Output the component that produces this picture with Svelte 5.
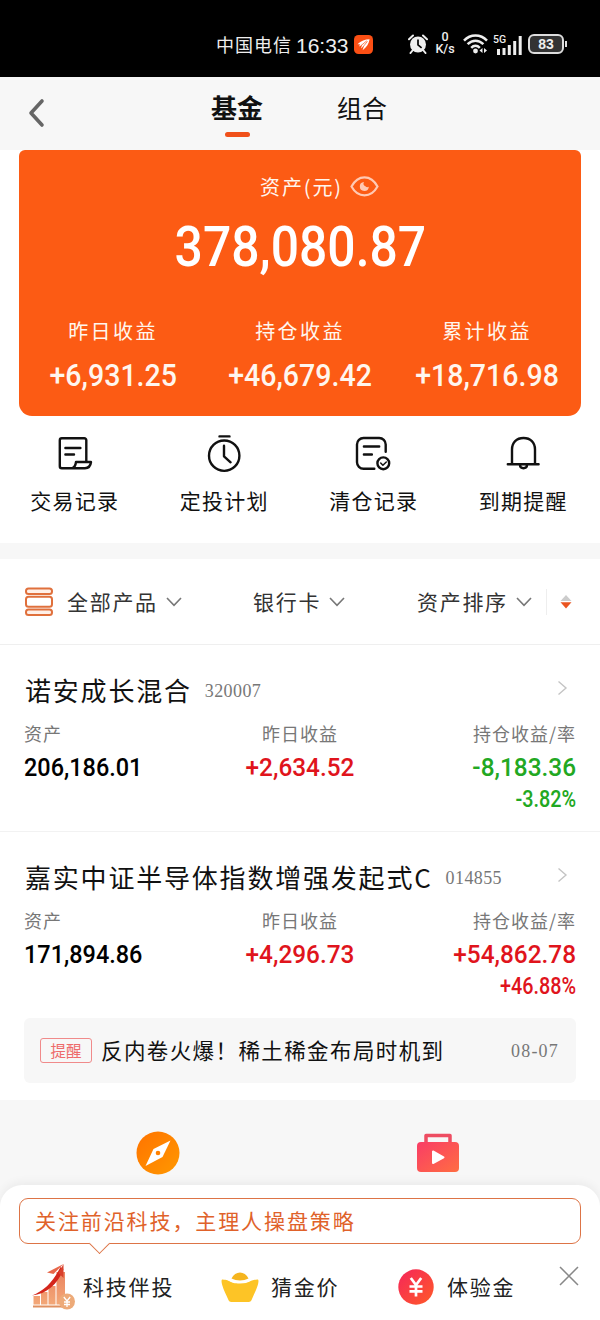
<script>
  const tabs = ['基金', '组合'];
  let activeTab = '基金';
  let panelOpen = true;

  const profits = [
    { label: '昨日收益', value: '+6,931.25' },
    { label: '持仓收益', value: '+46,679.42' },
    { label: '累计收益', value: '+18,716.98' }
  ];

  const funds = [
    {
      name: '诺安成长混合',
      code: '320007',
      asset: '206,186.01',
      yesterday: '+2,634.52',
      hold: '-8,183.36',
      rate: '-3.82%'
    },
    {
      name: '嘉实中证半导体指数增强发起式C',
      code: '014855',
      asset: '171,894.86',
      yesterday: '+4,296.73',
      hold: '+54,862.78',
      rate: '+46.88%',
      notice: { text: '反内卷火爆！稀土稀金布局时机到', date: '08-07' }
    }
  ];

  const isDown = (v) => v.startsWith('-');
</script>

{#snippet arrowDown()}
  <svg class="arrow-down" width="16" height="10" viewBox="0 0 16 10">
    <path d="M1 1l7 7.4L15 1" fill="none" stroke="#777" stroke-width="1.6" />
  </svg>
{/snippet}

<main>
  <div class="status">
    <span class="carrier">中国电信</span>
    <span class="time">16:33</span>
    <svg class="app-badge" width="19" height="19" viewBox="0 0 19 19">
      <rect width="19" height="19" rx="4.5" fill="#fb4f14" />
      <path d="M3.5 9.2C7 5.600 11 4.200 15.600 4.200 15 8.500 12.800 12 8.600 15.300l1.300-4.300-2.900 2.500 1-3.600-2.900 1.600.9-2.300z" fill="#fff" />
      <path d="M6.800 10.800l6-5M8.500 12.500l5-6.200" stroke="#fb4f14" stroke-width=".7" />
    </svg>
    <svg class="alarm" width="20" height="20" viewBox="0 0 20 20">
      <circle cx="10" cy="10.500" r="8" fill="#eee" />
      <path d="M1 5.200L5 1.500M19 5.200L15 1.500M4.500 16.500L2.500 19M15.500 16.500l2 2.500" stroke="#eee" stroke-width="2" stroke-linecap="round" />
      <path d="M10 5.500v5.300l3.600 3" fill="none" stroke="#000" stroke-width="1.700" />
    </svg>
    <span class="speed"><span>0</span><span>K/s</span></span>
    <svg class="wifi" width="25" height="20" viewBox="0 0 25 20">
      <g fill="none" stroke="#eee" stroke-width="2.500">
        <path d="M1 6.600c6.500-6.800 16.500-6.800 23 0" />
        <path d="M4.600 10.200c4.800-4.700 11-4.700 15.800 0" />
        <path d="M8.200 13.800c2.600-2.600 6-2.600 8.600 0" />
      </g>
      <circle cx="12.500" cy="17" r="2.400" fill="#eee" />
      <path d="M16.500 16.500l3-2.500v5zM24 16.500l-3-2.500v5z" fill="#eee" />
    </svg>
    <span class="signal">
      <b>5G</b>
      <svg width="25" height="19" viewBox="0 0 25 19">
        <path d="M1.500 19v-6M7 19v-7M12.300 19v-10M17.700 19V5M23.200 19V0" stroke="#eee" stroke-width="3" />
      </svg>
    </span>
    <span class="battery">83</span>
    <i class="battery-tip"></i>
  </div>

  <header>
    <svg class="back" width="18" height="30" viewBox="0 0 18 30">
      <path d="M15 3L4 15l11 12" fill="none" stroke="#666" stroke-width="3.600" stroke-linecap="round" stroke-linejoin="round" />
    </svg>
    <nav>
      {#each tabs as tab}
        <button class:active={tab === activeTab} on:click={() => (activeTab = tab)}>{tab}</button>
      {/each}
    </nav>
  </header>

  <section class="card-wrap">
    <div class="card">
      <div class="card-title">
        <span>资产(元)</span>
        <svg width="29" height="21" viewBox="0 0 29 21">
          <path d="M1.500 10.500C8-1.800 21-1.800 27.500 10.500 21 22.300 8 22.300 1.500 10.500z" fill="none" stroke="#ffc9b3" stroke-width="2.200" />
          <path d="M14 6a4.500 4.500 0 1 0 4.800 4.800 2.600 2.600 0 0 1-3.400-.6A3 3 0 0 1 14 6z" fill="#ffc9b3" />
        </svg>
      </div>
      <div class="total"><span class="num">378,080.87</span></div>
      <div class="profits">
        {#each profits as item}
          <div>
            <p>{item.label}</p>
            <span class="num">{item.value}</span>
          </div>
        {/each}
      </div>
    </div>
  </section>

  <section class="actions">
    <div class="action">
      <svg width="48" height="40" viewBox="0 0 48 40">
        <path d="M36.300 29V7.200a2 2 0 0 0-2-2H11.800a2 2 0 0 0-2 2v26a2 2 0 0 0 2 2H35c4 0 5.500-2 6-6.200H26c-.5 3.500-1 5-3.500 6.200M15.400 15h15M15.400 21.500H24" />
      </svg>
      <span>交易记录</span>
    </div>
    <div class="action">
      <svg width="48" height="40" viewBox="0 0 48 40">
        <circle cx="24.200" cy="22.700" r="15.200" />
        <path d="M19.500 3.400h10M24 12.700v10.600l6.600 6" />
      </svg>
      <span>定投计划</span>
    </div>
    <div class="action">
      <svg width="48" height="40" viewBox="0 0 48 40">
        <path d="M36.700 18.700V11.500a6.500 6.500 0 0 0-6.500-6.500H14.500A6.500 6.500 0 0 0 8 11.500v17.700a6.500 6.500 0 0 0 6.500 6.500h10.800M14.900 13.500h15.300M14.900 21.500h8" />
        <circle cx="34.300" cy="30.300" r="5.900" />
        <path class="thin" d="M31.700 30l2.200 2.200 3.400-3.200" />
      </svg>
      <span>清仓记录</span>
    </div>
    <div class="action">
      <svg width="48" height="40" viewBox="0 0 48 40">
        <path d="M13 31V16.500C13 9.500 17.500 5 24.500 5S36 9.500 36 16.500V31M8.800 31.200h30.800M20.800 31.500c.4 5 7 5 7.400 0" />
      </svg>
      <span>到期提醒</span>
    </div>
  </section>

  <section class="filter">
    <svg class="stack" width="30" height="30" viewBox="0 0 30 30">
      <g fill="#fff0e8" stroke="#e0703c" stroke-width="2">
        <rect x="2" y="1.500" width="26" height="5.500" rx="2.500" />
        <rect x="2" y="9.800" width="26" height="10" rx="2.500" fill="#fff" />
        <rect x="2" y="22.500" width="26" height="5.500" rx="2.500" />
      </g>
    </svg>
    <span class="f-all">全部产品</span>
    {@render arrowDown()}
    <span class="f-card">银行卡</span>
    {@render arrowDown()}
    <span class="f-sort">资产排序</span>
    {@render arrowDown()}
    <i class="divider"></i>
    <svg class="sorter" width="12" height="16" viewBox="0 0 12 16">
      <path d="M.5 7L6 1l5.500 6z" fill="#ccc" />
      <path d="M.5 8.300h11L6 14.500z" fill="#ea5420" />
    </svg>
  </section>

  {#each funds as fund}
    <section class="fund">
      <div class="fund-head">
        <h3>{fund.name}</h3>
        <span class="code">{fund.code}</span>
        <svg width="11" height="16" viewBox="0 0 11 16">
          <path d="M1.500 1.500L9 8l-7.500 6.500" fill="none" stroke="#c4c4c4" stroke-width="1.400" />
        </svg>
      </div>
      <div class="fund-data">
        <div>
          <p>资产</p>
          <span class="num">{fund.asset}</span>
        </div>
        <div class="mid">
          <p>昨日收益</p>
          <span class="num up">{fund.yesterday}</span>
        </div>
        <div class="right">
          <p>持仓收益/率</p>
          <span class="num" class:up={!isDown(fund.hold)} class:down={isDown(fund.hold)}>{fund.hold}</span>
          <span class="num rate" class:up={!isDown(fund.rate)} class:down={isDown(fund.rate)}>{fund.rate}</span>
        </div>
      </div>
      {#if fund.notice}
        <div class="notice">
          <em>提醒</em>
          <span>{fund.notice.text}</span>
          <time>{fund.notice.date}</time>
        </div>
      {/if}
    </section>
  {/each}

  <section class="entries">
    <svg width="44" height="44" viewBox="0 0 44 44">
      <defs>
        <linearGradient id="compass" x1="0" y1="0" x2="1" y2="1">
          <stop offset="0" stop-color="#ff7300" />
          <stop offset="1" stop-color="#ff9800" />
        </linearGradient>
      </defs>
      <circle cx="22" cy="22" r="21.500" fill="url(#compass)" />
      <path d="M34.500 9.500L26.500 26 9.500 35 17.500 18z" fill="#fff" />
      <circle cx="22" cy="22" r="2.300" fill="#ff8100" />
    </svg>
    <svg width="44" height="44" viewBox="0 0 44 44">
      <defs>
        <linearGradient id="video" x1="0" y1="0" x2="1" y2="1">
          <stop offset="0" stop-color="#f93d66" />
          <stop offset="1" stop-color="#ff6d42" />
        </linearGradient>
      </defs>
      <path d="M10 13V4.500h24V13" fill="none" stroke="#ee4d62" stroke-width="3.500" stroke-linejoin="round" />
      <rect x="1" y="11" width="42" height="30" rx="4" fill="url(#video)" />
      <path d="M17 20.500v11.500l10.500-5.700z" fill="#fff" stroke="#fff" stroke-width="2" stroke-linejoin="round" />
    </svg>
  </section>

  {#if panelOpen}
    <footer>
      <div class="bubble">关注前沿科技，主理人操盘策略</div>
      <div class="links">
        <svg class="chart" width="44" height="48" viewBox="0 0 44 48">
          <defs>
            <linearGradient id="bars" x1="0" y1="0" x2="0" y2="1">
              <stop offset="0" stop-color="#ea8360" />
              <stop offset="1" stop-color="#f3a878" />
            </linearGradient>
          </defs>
          <path d="M2.500 33h6.500v8.500H2.500zM10 29h6.500v12.500H10zM17.500 23h7v18.500h-7zM25.500 9h8.500v32.500h-8.500z" fill="url(#bars)" />
          <path d="M2 43.500h29" stroke="#df9060" stroke-width="2" />
          <path d="M1 32.500C13 28 22 19 29.500 4l3 2C27 21 16 31 1 32.500z" fill="#d4261c" />
          <path d="M32.500 1L16 9.500l6.500 1.500 9-9" fill="#e8674a" />
          <path d="M32.500 1v14l-5-5z" fill="#d9402c" />
          <circle cx="36" cy="38.500" r="8" fill="#edaa78" />
          <path d="M32.800 34l3.200 4 3.200-4M36 38v6M33 39h6M33 41.500h6" stroke="#fff" stroke-width="1.300" fill="none" />
        </svg>
        <span>科技伴投</span>
        <svg class="ingot" width="38" height="34" viewBox="0 0 38 34">
          <path d="M10.500 8.500C14 .5 24 .5 27.500 8.500c-5 2.500-12 2.500-17 0z" fill="#f5b51f" />
          <path d="M1.500 9.500c9 .5 6 4 17.500 4s8.500-3.500 17.500-4c1.500 0 1 3 .3 5.500-1.600 5.500-4 9.500-5.800 14-.7 2-1.500 3-3.500 3h-17c-2 0-2.800-1-3.500-3-1.800-4.500-4.200-8.500-5.800-14-.7-2.500-1.200-5.500.3-5.500z" fill="#fdc426" />
        </svg>
        <span>猜金价</span>
        <svg class="yen" width="36" height="36" viewBox="0 0 36 36">
          <defs>
            <linearGradient id="coin" x1="0" y1="0" x2="1" y2="1">
              <stop offset="0" stop-color="#f5265a" />
              <stop offset="1" stop-color="#ff5a28" />
            </linearGradient>
          </defs>
          <circle cx="18" cy="18" r="17.700" fill="url(#coin)" />
          <path d="M12.800 9l5.200 7 5.200-7M18 16v11.500M11.500 17.500h13M11.500 22.300h13" stroke="#fff" stroke-width="2.700" fill="none" />
        </svg>
        <span>体验金</span>
        <button class="close" aria-label="关闭" on:click={() => (panelOpen = false)}>
          <svg width="20" height="20" viewBox="0 0 20 20">
            <path d="M1 1l18 18M19 1L1 19" stroke="#888" stroke-width="1.500" />
          </svg>
        </button>
      </div>
    </footer>
  {/if}
</main>

<style>
  :global(body) {
    margin: 0;
    background: #f7f7f7;
  }
  main {
    width: 600px;
    height: 1320px;
    overflow: hidden;
    background: #f7f7f7;
    font-family: 'Noto Sans CJK SC', sans-serif;
    font-weight: 400;
    color: #111;
    white-space: nowrap;
  }
  svg {
    display: block;
    flex: none;
  }
  p,
  h3 {
    margin: 0;
    font-weight: 400;
  }
  button {
    padding: 0;
    border: 0;
    background: none;
    font: inherit;
    color: inherit;
  }
  .num {
    display: inline-block;
    font-family: Roboto, sans-serif;
    font-weight: 500;
    transform: scaleX(0.9);
  }

  /* status bar */
  .status {
    box-sizing: border-box;
    height: 77px;
    padding: 11px 0 0 216px;
    display: flex;
    align-items: center;
    background: #000;
    color: #eee;
  }
  .carrier {
    width: 80px;
    font-size: 18px;
    letter-spacing: 1px;
  }
  .time {
    width: 58px;
    padding-top: 4px;
    font-family: 'Liberation Sans', sans-serif;
    font-size: 21px;
  }
  .alarm {
    margin-left: 35px;
  }
  .speed {
    width: 20px;
    margin-left: 7px;
    display: flex;
    flex-direction: column;
    align-items: center;
    font: 500 12.5px/14px Roboto, sans-serif;
  }
  .speed span:first-child {
    line-height: 10px;
  }
  .wifi {
    margin-left: 8px;
  }
  .signal {
    display: flex;
    align-items: flex-end;
    margin-left: 5px;
  }
  .signal b {
    width: 4px;
    padding-bottom: 9px;
    font: 500 10.5px/12px Roboto, sans-serif;
  }
  .battery {
    box-sizing: border-box;
    width: 36px;
    height: 20px;
    margin-left: 6px;
    border: 2px solid #ddd;
    border-radius: 6px;
    background: #333;
    font: bold 14px/17px 'Liberation Sans', sans-serif;
    text-align: center;
  }
  .battery-tip {
    width: 2px;
    height: 6px;
    margin-left: 1px;
    background: #ddd;
  }

  header {
    display: flex;
    height: 73px;
    background: #f7f7f7;
  }
  .back {
    margin: 21px 0 0 27px;
  }
  nav {
    display: flex;
    gap: 74px;
    margin: 9px 0 0 166px;
  }
  nav button {
    height: 51px;
    display: flex;
    flex-direction: column;
    align-items: center;
    font-size: 25px;
    line-height: 42px;
  }
  nav button.active {
    font-size: 26px;
    font-weight: 700;
  }
  nav button.active::after {
    content: '';
    width: 25px;
    height: 5px;
    margin-top: 4px;
    border-radius: 3px;
    background: #f0501a;
  }

  .card-wrap {
    padding: 0 19px;
    background: #fff;
  }
  .card {
    height: 266px;
    border-radius: 6px 6px 13px 13px;
    background: #fc5b14;
    color: #fff6ee;
  }
  .card-title {
    display: flex;
    align-items: center;
    justify-content: center;
    gap: 7px;
    height: 73px;
    padding-left: 39px;
  }
  .card-title span {
    font-size: 20px;
    letter-spacing: 1.9px;
  }
  .total {
    height: 48px;
    text-align: center;
    font-size: 56px;
    line-height: 38px;
    color: #fff;
  }
  .total .num {
    transform: scaleX(0.89);
  }
  .profits {
    display: grid;
    grid-template-columns: repeat(3, 187px);
    margin-top: 44px;
    text-align: center;
  }
  .profits p {
    font-size: 20px;
    line-height: 32px;
    letter-spacing: 2.4px;
  }
  .profits div {
    padding-left: 1px;
  }
  .profits .num {
    margin: 12px -10px 0;
    font-size: 31px;
    line-height: 34px;
    transform: scaleX(0.92);
  }

  .actions {
    height: 127px;
    display: grid;
    grid-template-columns: repeat(4, 149.5px);
    background: #fff;
  }
  .action {
    display: flex;
    flex-direction: column;
    align-items: center;
    padding-top: 17px;
    font-size: 21px;
    line-height: 32px;
    letter-spacing: 1.3px;
  }
  .action span {
    margin-top: 11px;
  }
  .action svg {
    margin-right: 1px;
    fill: none;
    stroke: #111;
    stroke-width: 2.4;
    stroke-linecap: round;
    stroke-linejoin: round;
  }
  .action .thin {
    stroke-width: 1.5;
  }

  .filter {
    box-sizing: border-box;
    height: 86px;
    margin-top: 16px;
    padding-left: 24px;
    display: flex;
    align-items: center;
    background: #fff;
    border-bottom: 1px solid #efefef;
    font-size: 21px;
    letter-spacing: 1.7px;
    color: #333;
  }
  .filter span {
    padding-bottom: 2px;
  }
  .f-all {
    width: 99px;
    margin-left: 13px;
  }
  .f-card {
    width: 76px;
    margin-left: 71px;
  }
  .f-sort {
    width: 99px;
    margin-left: 72px;
  }
  .divider {
    width: 1px;
    height: 26px;
    margin: 0 13px 0 14px;
    background: #eee;
  }

  .fund {
    padding: 25px 24px 0;
    height: 161px;
    background: #fff;
    border-bottom: 1px solid #f2f2f2;
  }
  .fund:has(.notice) {
    height: 243px;
    border-bottom: 0;
  }
  .fund-head {
    display: flex;
    align-items: center;
    height: 38px;
  }
  .fund-head h3 {
    padding-left: 1px;
    font-size: 26px;
    letter-spacing: 1.8px;
  }
  .code {
    margin-left: 13px;
    padding-top: 5px;
    font-family: 'Liberation Serif', serif;
    font-size: 18px;
    letter-spacing: 0.4px;
    color: #777;
  }
  .fund-head svg {
    margin: 0 8px 2px auto;
  }
  .fund-data {
    display: grid;
    grid-template-columns: repeat(3, 184px);
  }
  .fund-data p {
    margin-top: 11px;
    font-size: 18px;
    line-height: 28px;
    letter-spacing: 1px;
    color: #777;
  }
  .fund-data .num {
    display: block;
    margin-top: 3px;
    font-size: 26.5px;
    line-height: 34px;
    color: #000;
    transform: scaleX(0.885);
    transform-origin: left;
  }
  .mid {
    text-align: center;
  }
  .fund-data .mid .num {
    transform: scaleX(0.92);
    transform-origin: center;
  }
  .right {
    text-align: right;
  }
  .fund-data .right .num {
    transform: scaleX(0.92);
    transform-origin: right;
  }
  .fund-data .right .rate {
    margin-top: 0;
    font-size: 23px;
    line-height: 32px;
    transform: scaleX(0.86);
  }
  .fund-data .up {
    color: #e0141c;
  }
  .fund-data .down {
    color: #22a822;
  }
  .notice {
    display: flex;
    align-items: center;
    height: 65px;
    margin-top: 15px;
    padding: 0 17px 0 16px;
    border-radius: 6px;
    background: #f7f7f7;
  }
  .notice em {
    width: 50px;
    border: 1px solid #f08a8a;
    border-radius: 3px;
    font-size: 15.5px;
    font-style: normal;
    line-height: 23px;
    text-align: center;
    color: #ee6b6b;
  }
  .notice span {
    margin-left: 9px;
    padding-bottom: 3px;
    font-size: 21.5px;
    letter-spacing: 1.4px;
  }
  .notice time {
    margin-left: auto;
    padding-top: 2px;
    font-family: 'Liberation Serif', serif;
    font-size: 18px;
    letter-spacing: 1.2px;
    color: #777;
  }

  .entries {
    height: 54px;
    padding: 31px 140px 0 136px;
    display: flex;
    justify-content: space-between;
  }

  footer {
    position: relative;
    box-sizing: border-box;
    height: 135px;
    padding: 13px 19px 0;
    border-radius: 22px 22px 0 0;
    background: #fff;
    box-shadow: 0 -3px 10px rgba(0, 0, 0, 0.05);
  }
  .bubble {
    position: relative;
    height: 44px;
    padding-left: 15px;
    border: 1px solid #dd7446;
    border-radius: 9px;
    font-size: 21px;
    line-height: 43px;
    letter-spacing: 1.9px;
    color: #e0622a;
  }
  .bubble::after {
    content: '';
    position: absolute;
    left: 72px;
    bottom: -8px;
    width: 14px;
    height: 14px;
    border: solid #dd7446;
    border-width: 0 1px 1px 0;
    background: #fff;
    transform: rotate(45deg);
  }
  .links {
    display: flex;
    align-items: center;
    height: 48px;
    margin-top: 19px;
    font-size: 21px;
    letter-spacing: 1.8px;
    color: #222;
  }
  .chart {
    margin: 0 8px 0 12px;
  }
  .links span {
    width: 92px;
    padding-bottom: 2px;
  }
  .ingot {
    margin: 0 12px 0 46px;
  }
  .ingot + span,
  .yen + span {
    width: 70px;
  }
  .yen {
    margin: 0 13px 0 57px;
  }
  .close {
    margin: 0 0 22px 42px;
  }
</style>
